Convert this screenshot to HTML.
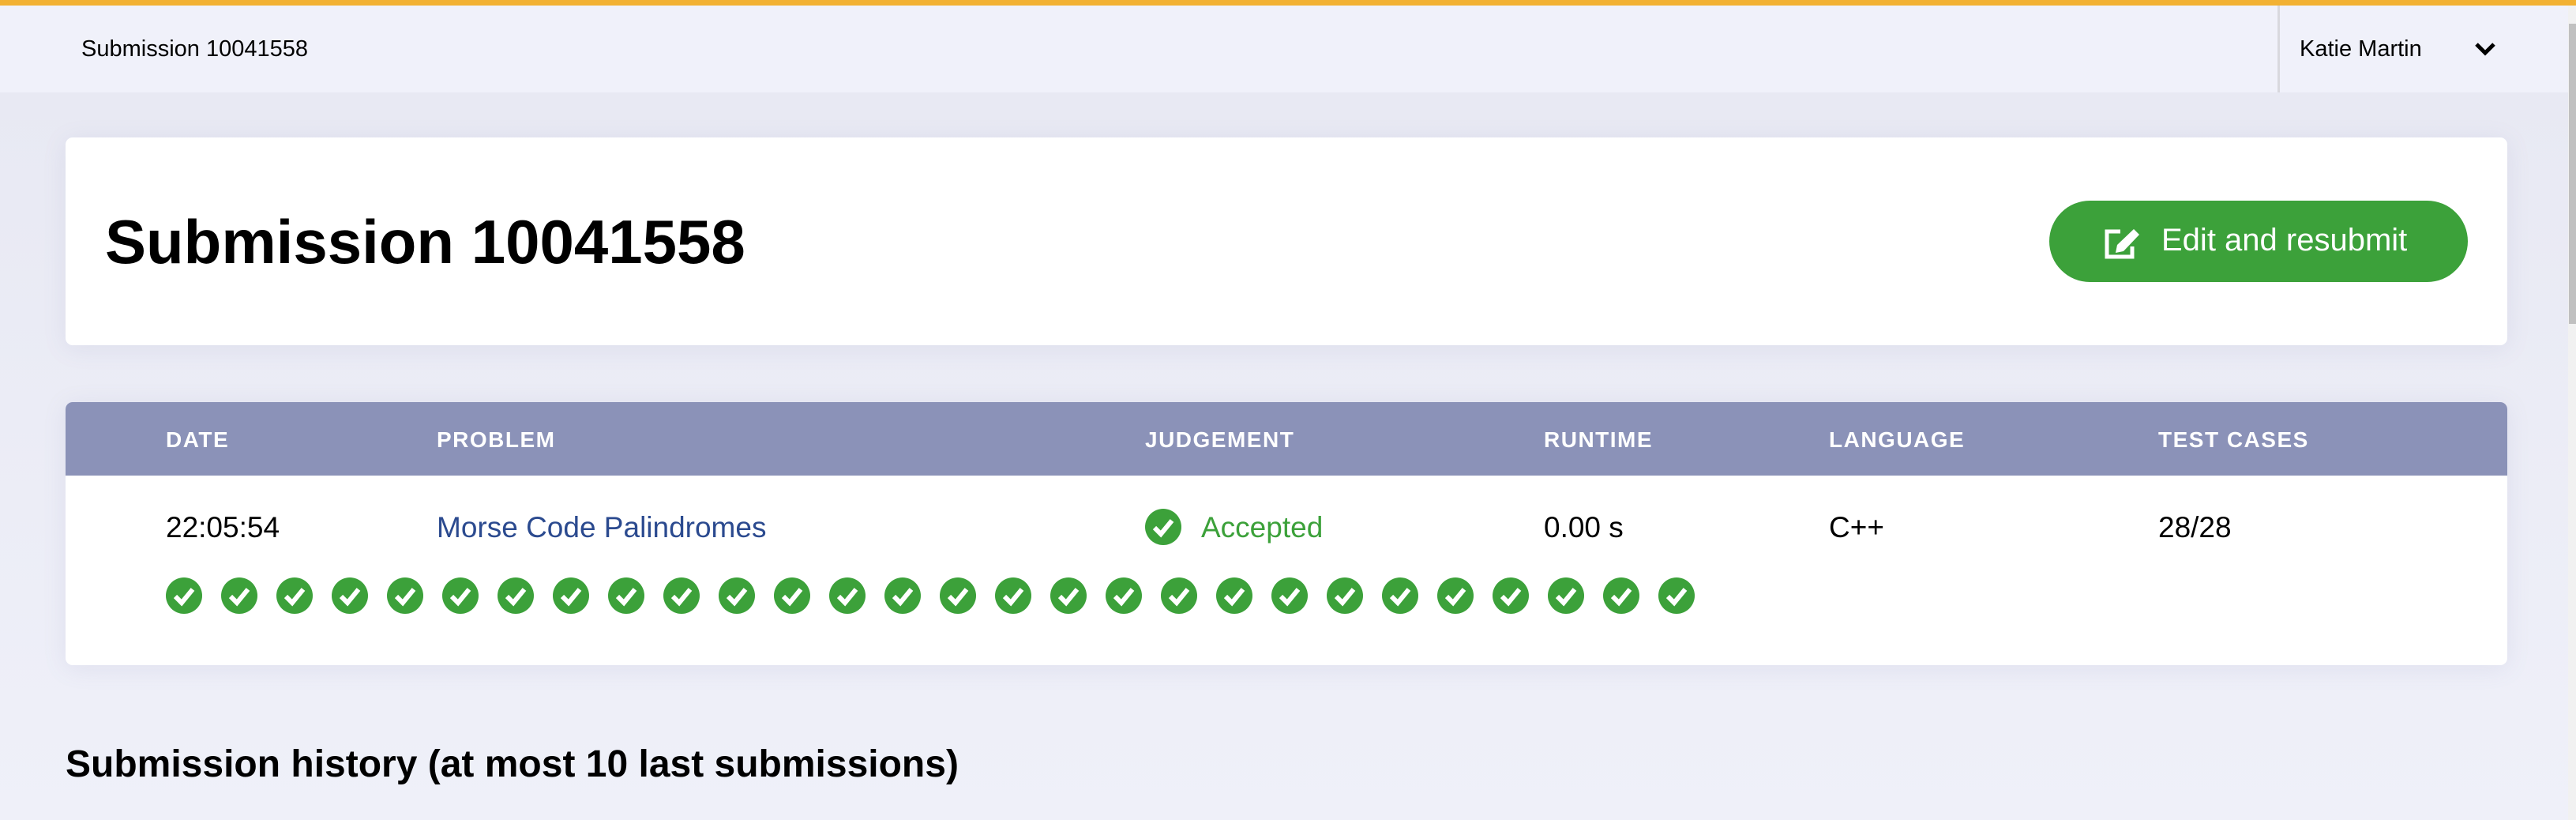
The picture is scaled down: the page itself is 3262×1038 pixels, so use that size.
<!DOCTYPE html>
<html><head><meta charset="utf-8"><style>
*{margin:0;padding:0;box-sizing:border-box}
body{width:3262px;height:1038px;overflow:hidden;background:#eceef7;font-family:"Liberation Sans",sans-serif;position:relative}
.top{position:absolute;left:0;top:0;width:3262px;height:7px;background:#f2b133}
.nav{position:absolute;left:0;top:7px;width:3252px;height:110px;background:#f0f1fa}
.nav .t{position:absolute;left:103px;top:39px;font-size:29px;color:#000}
.sep{position:absolute;left:2884px;top:0;width:3px;height:110px;background:#d8d8de}
.user{position:absolute;left:2912px;top:39px;font-size:29px;color:#000}
.scroll{position:absolute;left:3253px;top:30px;width:9px;height:380px;background:#c0c0c0}
.scrolltr{position:absolute;left:3252px;top:7px;width:10px;height:1031px;background:#f1f1f1}
.main{position:absolute;left:0;top:117px;width:3252px;height:921px;background:linear-gradient(#e8e9f3,#eff0f9)}
.card{position:absolute;left:83px;width:3092px;background:#fff;border-radius:9px;box-shadow:0 4px 30px rgba(120,120,170,.12)}
h1{position:absolute;left:50px;top:90px;font-size:78px;font-weight:bold;line-height:84px;color:#000}
.btn{position:absolute;left:2512px;top:80px;width:530px;height:103px;border-radius:52px;background:#3ca13a;color:#fff;font-size:40px}
.btn span{position:absolute;left:142px;top:28px}
.head{position:absolute;left:0;top:0;width:3092px;height:93px;background:#8b92b8;border-radius:9px 9px 0 0}
.h{position:absolute;top:32px;color:#fff;font-weight:bold;font-size:28px;letter-spacing:1.5px}
.c{position:absolute;top:138px;font-size:37px;color:#000}
h2{position:absolute;left:83px;top:940px;font-size:48px;font-weight:bold;color:#000}
</style></head><body>
<div class="top"></div>
<div class="nav"><div class="t">Submission 10041558</div><div class="sep"></div><div class="user">Katie Martin</div>
<svg style="position:absolute;left:3133px;top:46px" width="28" height="18" viewBox="0 0 28 18"><path d="M3 3 L14 14 L25 3" stroke="#000" stroke-width="5" fill="none"/></svg></div>
<div class="scrolltr"></div><div class="scroll"></div>
<div class="main"></div>
<div class="card" style="top:174px;height:263px">
<h1>Submission 10041558</h1>
<div class="btn"><svg style="position:absolute;left:70px;top:34px" width="48" height="40" viewBox="0 0 48 40"><path d="M20 5 H3 V37 H35 V24" stroke="#fff" stroke-width="5" fill="none"/><path d="M14 32 L16 22 L37 2 L44 9 L24 30 Z" fill="#fff"/></svg><span>Edit and resubmit</span></div>
</div>
<div class="card" style="top:509px;height:333px">
<div class="head">
<div class="h" style="left:127px">DATE</div>
<div class="h" style="left:470px">PROBLEM</div>
<div class="h" style="left:1367px">JUDGEMENT</div>
<div class="h" style="left:1872px">RUNTIME</div>
<div class="h" style="left:2233px">LANGUAGE</div>
<div class="h" style="left:2650px">TEST CASES</div>
</div>
<div class="c" style="left:127px">22:05:54</div>
<div class="c" style="left:470px;color:#2b4a8f">Morse Code Palindromes</div>
<svg style="position:absolute;left:1367px;top:135px" width="46" height="46" viewBox="0 0 46 46"><circle cx="23" cy="23" r="23" fill="#3ca13a"/><path d="M12 24 L20 32 L34 15" stroke="#fff" stroke-width="6" fill="none"/></svg>
<div class="c" style="left:1438px;color:#3ca13a">Accepted</div>
<div class="c" style="left:1872px">0.00 s</div>
<div class="c" style="left:2233px">C++</div>
<div class="c" style="left:2650px">28/28</div>
<svg style="position:absolute;left:127px;top:222px" width="2000" height="50" viewBox="0 0 2000 50">
<defs><g id="k"><circle cx="23" cy="23" r="23" fill="#3ca13a"/><path d="M12 24 L20 32 L34 15" stroke="#fff" stroke-width="6" fill="none"/></g></defs>
<use href="#k" x="0"/><use href="#k" x="70"/><use href="#k" x="140"/><use href="#k" x="210"/><use href="#k" x="280"/><use href="#k" x="350"/><use href="#k" x="420"/><use href="#k" x="490"/><use href="#k" x="560"/><use href="#k" x="630"/><use href="#k" x="700"/><use href="#k" x="770"/><use href="#k" x="840"/><use href="#k" x="910"/><use href="#k" x="980"/><use href="#k" x="1050"/><use href="#k" x="1120"/><use href="#k" x="1190"/><use href="#k" x="1260"/><use href="#k" x="1330"/><use href="#k" x="1400"/><use href="#k" x="1470"/><use href="#k" x="1540"/><use href="#k" x="1610"/><use href="#k" x="1680"/><use href="#k" x="1750"/><use href="#k" x="1820"/><use href="#k" x="1890"/>
</svg>
</div>
<h2>Submission history (at most 10 last submissions)</h2>
</body></html>
